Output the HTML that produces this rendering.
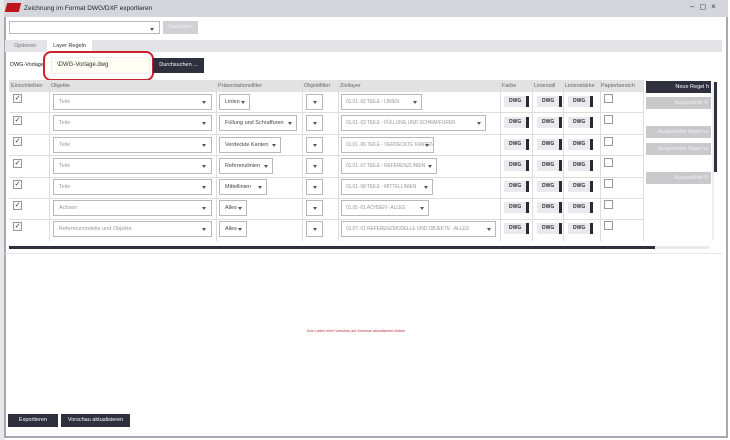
<!DOCTYPE html>
<html><head><meta charset="utf-8"><style>
*{box-sizing:border-box;margin:0;padding:0}
body{width:730px;height:440px;background:#fff;position:relative;overflow:hidden;font-family:"Liberation Sans",sans-serif;font-size:6px;color:#333}
.a{position:absolute}
.sel{position:absolute;border:1px solid #b8b8b8;background:#fff;color:#999;font-size:5.5px;padding-left:5px;line-height:14px;height:16px;white-space:nowrap;overflow:hidden}
.sel:after{content:"";position:absolute;right:5px;top:6px;border-left:2.5px solid transparent;border-right:2.5px solid transparent;border-top:3px solid #555}
.sel.i{padding-right:12px}
.sel.i:after{right:4px}
.z{font-size:5px;letter-spacing:-0.15px;padding-left:4px}
.cb{position:absolute;left:13px;width:9px;height:9px;border:1px solid #999;background:#fafafa;font-size:7px;line-height:7px;text-align:center;color:#333}
.ucb{position:absolute;left:604px;width:9px;height:9px;border:1px solid #999;background:#fff}
.dwg{position:absolute;width:25px;height:11px;background:#e9e9ee;font-size:5px;font-weight:bold;color:#333;line-height:11px;padding-left:5px;border-right:3px solid #2a2a35}
.vl{position:absolute;top:80px;height:161px;width:1px;background:#ddd}
.hl{position:absolute;left:9px;width:634px;height:1px;background:#ddd}
.btn{position:absolute;background:#2f2f3d;color:#fff;font-size:5.5px;line-height:13px;text-align:center}
.gb{position:absolute;background:#c9c9cc;color:#eee;font-size:5px;line-height:12px;text-align:right;padding-right:3px;width:65px;height:12px;left:646px;overflow:hidden;white-space:nowrap}
.hd{position:absolute;top:83px;font-size:5.5px;color:#666}
</style></head><body>
<div class="a" style="left:0;top:0;width:5px;height:440px;background:#e8e8e8"></div>
<div class="a" style="left:4px;top:0;width:724px;height:438px;border:1px solid #a8a8b4;border-width:0 2px 2px 2px;background:#fff"></div>
<div class="a" style="left:4px;top:0;width:724px;height:17px;background:#d5d6dc"></div>
<div class="a" style="left:6px;top:3px;width:14px;height:9px;background:#c0141c;transform:skewX(-15deg)"></div>
<div class="a" style="left:24px;top:5px;font-size:6.5px;color:#222">Zeichnung im Format DWG/DXF exportieren</div>
<div class="a" style="left:690px;top:2px;font-size:8px;color:#333;letter-spacing:5px">–◻×</div>
<div class="sel" style="left:9px;top:21px;width:151px;height:13px"></div>
<div class="a" style="left:163px;top:21px;width:35px;height:13px;background:#d0d0d4;color:#eee;font-size:5.5px;line-height:13px;text-align:center">Speichern</div>
<div class="a" style="left:5px;top:40px;width:717px;height:12px;background:#e4e4e8"></div>
<div class="a" style="left:14px;top:43px;font-size:5.5px;color:#777">Optionen</div>
<div class="a" style="left:47px;top:40px;width:45px;height:12px;background:#fff;font-size:5.5px;line-height:12px;text-align:center;color:#333">Layer Regeln</div>
<div class="a" style="left:10px;top:62px;font-size:5.5px;color:#222">DWG-Vorlage</div>
<div class="a" style="left:43px;top:51px;width:111px;height:30px;border:2px solid #c8232c;border-radius:8px"></div>
<div class="a" style="left:51px;top:57px;width:99px;height:17px;background:#fffef4;border:1px solid #eee;font-size:6px;line-height:15px;padding-left:5px;color:#333">\DWG-Vorlage.dwg</div>
<div class="btn" style="left:153px;top:58px;width:51px;height:15px;line-height:15px">Durchsuchen ...</div>
<div class="a" style="left:9px;top:80px;width:634px;height:12px;background:#e2e2e2"></div>
<div class="hd" style="left:11px">Einschließen</div><div class="hd" style="left:51px">Objekte</div><div class="hd" style="left:218px">Präsentationsfilter</div><div class="hd" style="left:304px">Objektfilter</div><div class="hd" style="left:340px">Ziellayer</div><div class="hd" style="left:502px">Farbe</div><div class="hd" style="left:534px">Linienstil</div><div class="hd" style="left:565px">Linienstärke</div><div class="hd" style="left:601px">Papierbereich</div>
<div class="vl" style="left:49px"></div><div class="vl" style="left:216px"></div><div class="vl" style="left:302px"></div><div class="vl" style="left:338px"></div><div class="vl" style="left:500px"></div><div class="vl" style="left:532px"></div><div class="vl" style="left:563px"></div><div class="vl" style="left:600px"></div><div class="vl" style="left:643px"></div>
<div class="hl" style="top:112px"></div><div class="hl" style="top:134px"></div><div class="hl" style="top:155px"></div><div class="hl" style="top:177px"></div><div class="hl" style="top:198px"></div><div class="hl" style="top:219px"></div>

<div class="cb" style="top:94px">✓</div><div class="sel" style="left:53px;top:94px;width:159px">Teile</div><div class="sel i" style="left:219px;top:94px;width:31px;color:#444">Linien</div><div class="sel" style="left:306px;top:94px;width:17px"></div><div class="sel i z" style="left:341px;top:94px;width:81px">01.01 -02 TEILE - LINIEN</div>
<div class="cb" style="top:116px">✓</div><div class="sel" style="left:53px;top:115px;width:159px">Teile</div><div class="sel i" style="left:219px;top:115px;width:78px;color:#444">Füllung und Schraffuren</div><div class="sel" style="left:306px;top:115px;width:17px"></div><div class="sel i z" style="left:341px;top:115px;width:145px">01.01 -03 TEILE - FÜLLUNG UND SCHRAFFUREN</div>
<div class="cb" style="top:137px">✓</div><div class="sel" style="left:53px;top:137px;width:159px">Teile</div><div class="sel i" style="left:219px;top:137px;width:62px;color:#444">Verdeckte Kanten</div><div class="sel" style="left:306px;top:137px;width:17px"></div><div class="sel i z" style="left:341px;top:137px;width:93px">01.01 -06 TEILE - VERDECKTE KANTEN</div>
<div class="cb" style="top:159px">✓</div><div class="sel" style="left:53px;top:158px;width:159px">Teile</div><div class="sel i" style="left:219px;top:158px;width:54px;color:#444">Referenzlinien</div><div class="sel" style="left:306px;top:158px;width:17px"></div><div class="sel i z" style="left:341px;top:158px;width:96px">01.01 -07 TEILE - REFERENZLINIEN</div>
<div class="cb" style="top:180px">✓</div><div class="sel" style="left:53px;top:179px;width:159px">Teile</div><div class="sel i" style="left:219px;top:179px;width:48px;color:#444">Mittellinien</div><div class="sel" style="left:306px;top:179px;width:17px"></div><div class="sel i z" style="left:341px;top:179px;width:92px">01.01 -08 TEILE - MITTELLINIEN</div>
<div class="cb" style="top:201px">✓</div><div class="sel" style="left:53px;top:200px;width:159px">Achsen</div><div class="sel i" style="left:219px;top:200px;width:28px;color:#444">Alles</div><div class="sel" style="left:306px;top:200px;width:17px"></div><div class="sel i z" style="left:341px;top:200px;width:88px">01.05 -01 ACHSEN - ALLES</div>
<div class="cb" style="top:222px">✓</div><div class="sel" style="left:53px;top:221px;width:159px">Referenzmodelle und Objekte</div><div class="sel i" style="left:219px;top:221px;width:28px;color:#444">Alles</div><div class="sel" style="left:306px;top:221px;width:17px"></div><div class="sel i z" style="left:341px;top:221px;width:155px">01.07 -01 REFERENZMODELLE UND OBJEKTE - ALLES</div>

<div class="dwg" style="left:504px;top:96px">DWG</div><div class="dwg" style="left:537px;top:96px">DWG</div><div class="dwg" style="left:568px;top:96px">DWG</div><div class="ucb" style="top:94px"></div>
<div class="dwg" style="left:504px;top:117px">DWG</div><div class="dwg" style="left:537px;top:117px">DWG</div><div class="dwg" style="left:568px;top:117px">DWG</div><div class="ucb" style="top:115px"></div>
<div class="dwg" style="left:504px;top:139px">DWG</div><div class="dwg" style="left:537px;top:139px">DWG</div><div class="dwg" style="left:568px;top:139px">DWG</div><div class="ucb" style="top:137px"></div>
<div class="dwg" style="left:504px;top:160px">DWG</div><div class="dwg" style="left:537px;top:160px">DWG</div><div class="dwg" style="left:568px;top:160px">DWG</div><div class="ucb" style="top:158px"></div>
<div class="dwg" style="left:504px;top:181px">DWG</div><div class="dwg" style="left:537px;top:181px">DWG</div><div class="dwg" style="left:568px;top:181px">DWG</div><div class="ucb" style="top:179px"></div>
<div class="dwg" style="left:504px;top:202px">DWG</div><div class="dwg" style="left:537px;top:202px">DWG</div><div class="dwg" style="left:568px;top:202px">DWG</div><div class="ucb" style="top:200px"></div>
<div class="dwg" style="left:504px;top:223px">DWG</div><div class="dwg" style="left:537px;top:223px">DWG</div><div class="dwg" style="left:568px;top:223px">DWG</div><div class="ucb" style="top:221px"></div>

<div class="a" style="left:9px;top:246px;width:700px;height:3px;background:#eaeaea"></div>
<div class="a" style="left:9px;top:246px;width:646px;height:3px;background:#2f2f3d"></div>
<div class="a" style="left:712px;top:82px;width:2px;height:158px;background:#eee"></div>
<div class="a" style="left:714px;top:82px;width:3px;height:90px;background:#2f2f3d"></div>
<div class="a" style="left:5px;top:253px;width:717px;height:1px;background:#e6e6e6"></div>

<div class="btn" style="left:646px;top:81px;width:65px;height:12px;line-height:12px;text-align:right;padding-right:2px;overflow:hidden;white-space:nowrap">Neue Regel h</div>
<div class="gb" style="top:97px">Ausgewählte R</div>
<div class="gb" style="top:126px">Ausgewählte Regel na</div>
<div class="gb" style="top:143px">Ausgewählte Regel na</div>
<div class="gb" style="top:172px">Ausgewählte R</div>

<div class="a" style="left:307px;top:329px;font-size:3.6px;color:#c0303a">Zum Laden einer Vorschau auf Vorschau aktualisieren klicken</div>

<div class="btn" style="left:8px;top:414px;width:50px;height:13px">Exportieren</div>
<div class="btn" style="left:61px;top:414px;width:69px;height:13px">Vorschau aktualisieren</div>
</body></html>
